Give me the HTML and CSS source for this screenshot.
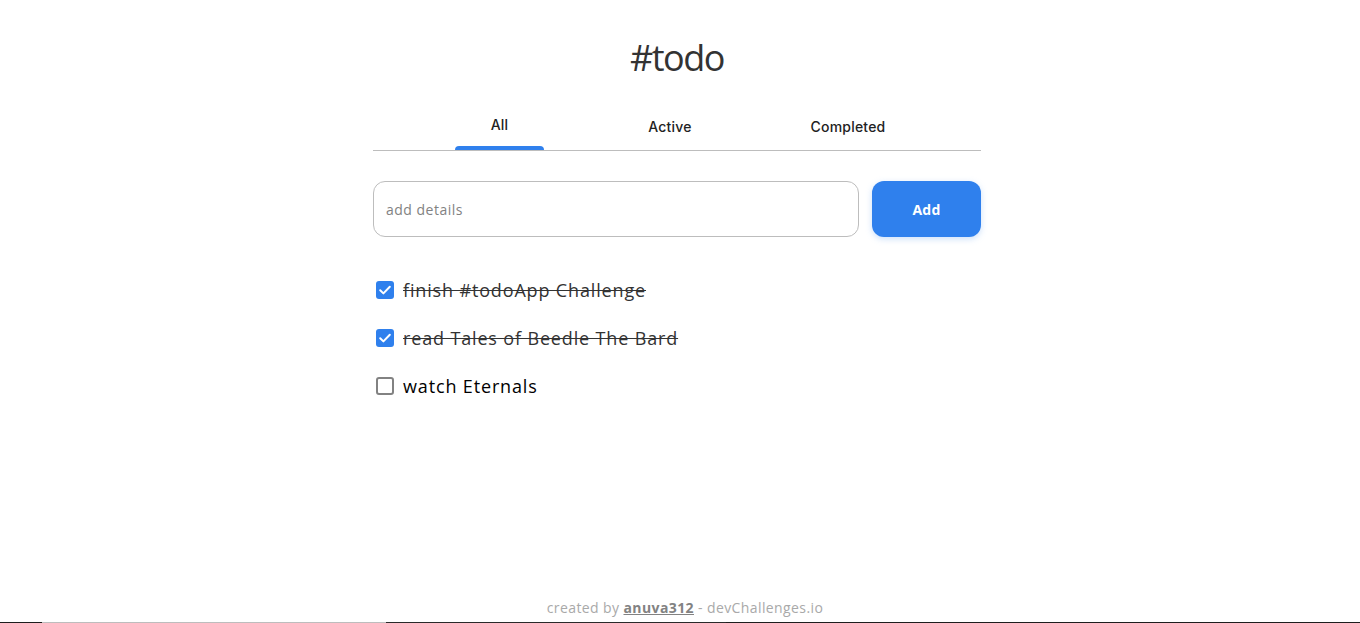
FILE: index.html
```html
<!DOCTYPE html>
<html lang="en">
<head>
<meta charset="utf-8">
<title>#todo</title>
<link rel="stylesheet" href="styles.css">
</head>
<body>
<main class="app">
  <h1 class="title">#todo</h1>
  <nav class="tabs">
    <span class="tab tab-all is-active">All</span>
    <span class="tab tab-active">Active</span>
    <span class="tab tab-completed">Completed</span>
  </nav>
  <form class="add-form">
    <input class="add-input" type="text" placeholder="add details">
    <button class="add-btn" type="button">Add</button>
  </form>
  <ul class="list">
    <li class="item done">
      <span class="box checked"><svg viewBox="0 0 18 18" width="18" height="18"><path d="M4.2 9.3l3.2 3.1 6.4-6.6" fill="none" stroke="#fff" stroke-width="2" stroke-linecap="round" stroke-linejoin="round"/></svg></span>
      <span class="label">finish #todoApp Challenge</span>
    </li>
    <li class="item done">
      <span class="box checked"><svg viewBox="0 0 18 18" width="18" height="18"><path d="M4.2 9.3l3.2 3.1 6.4-6.6" fill="none" stroke="#fff" stroke-width="2" stroke-linecap="round" stroke-linejoin="round"/></svg></span>
      <span class="label">read Tales of Beedle The Bard</span>
    </li>
    <li class="item">
      <span class="box"></span>
      <span class="label">watch Eternals</span>
    </li>
  </ul>
</main>
<footer class="footer">created by <a class="author" href="#">anuva312</a> - devChallenges.io</footer>
<div class="strip">
  <span class="seg seg-dark" style="width:42px"></span>
  <span class="seg seg-gray" style="width:344px"></span>
  <span class="seg seg-dark2" style="width:340px"></span>
  <span class="seg seg-dark" style="flex:1"></span>
</div>
</body>
</html>
```
FILE: styles.css
```css
* { box-sizing: border-box; }
html, body { height: 100%; }
body {
  margin: 0;
  padding-right: 6px;
  background: #fff;
  font-family: "Open Sans", "Liberation Sans", sans-serif;
  color: #333;
  display: flex;
  flex-direction: column;
  min-height: 100vh;
}
.app {
  width: 608px;
  margin: 0 auto;
  flex: 1;
  display: flex;
  flex-direction: column;
}
.title {
  margin: 36px 0 0;
  text-align: center;
  font-family: "Open Sans", sans-serif;
  font-weight: 400;
  font-size: 36px;
  line-height: 44px;
  letter-spacing: -1.5px;
  color: #333;
}
.tabs {
  margin-top: 28px;
  display: flex;
  padding-left: 82px;
  border-bottom: 1px solid #bdbdbd;
  height: 43px;
}
.tab {
  position: relative;
  text-align: center;
  font-family: Inter, "Open Sans", sans-serif;
  font-size: 14px;
  font-weight: 500;
  letter-spacing: 0.2px;
  color: #222;
  line-height: 17px;
  padding-top: 10px;
}
.tab-all { width: 89px; padding-top: 8px; }
.tab-active { width: 252px; }
.tab-completed { width: 104px; }
.tab.is-active::after {
  content: "";
  position: absolute;
  left: 0;
  right: 0;
  bottom: 0;
  height: 4px;
  background: #2f80ed;
  border-radius: 4px 4px 0 0;
}
.add-form {
  margin-top: 30px;
  display: flex;
  gap: 13px;
}
.add-input {
  flex: 1;
  height: 56px;
  border: 1px solid #bdbdbd;
  border-radius: 12px;
  padding: 0 12px;
  font-family: "Open Sans", sans-serif;
  font-size: 14px;
  letter-spacing: 0.5px;
  color: #333;
  outline: none;
}
.add-input::placeholder { color: #828282; }
.add-btn {
  width: 109px;
  height: 56px;
  border: none;
  border-radius: 12px;
  background: #2f80ed;
  color: #fff;
  font-family: "Open Sans", sans-serif;
  font-weight: 700;
  font-size: 14px;
  letter-spacing: 0.2px;
  box-shadow: 0 2px 6px rgba(127, 177, 243, 0.4);
}
.list {
  list-style: none;
  margin: 42px 0 0;
  padding: 0;
  display: flex;
  flex-direction: column;
  gap: 26px;
}
.item {
  display: flex;
  align-items: center;
  gap: 9px;
  padding-left: 3px;
  height: 22px;
}
.box {
  width: 18px;
  height: 18px;
  border: 2px solid #828282;
  border-radius: 3px;
  display: flex;
  flex: none;
}
.box.checked {
  border: none;
  background: #2f80ed;
}
.label {
  font-size: 18px;
  font-weight: 500;
  letter-spacing: 0.85px;
  line-height: 22px;
  color: #000;
}
.done .label {
  color: #333;
  text-decoration: line-through;
}
.footer {
  text-align: center;
  font-size: 14px;
  line-height: 17px;
  letter-spacing: 0.4px;
  color: #a9a9a9;
  padding-bottom: 6px;
  padding-left: 16px;
}
.author {
  color: #828282;
  font-weight: 700;
}
.strip {
  display: flex;
  height: 1px;
  margin-right: -6px;
}
.seg-dark { background: #1e1e1e; }
.seg-dark2 { background: #2a2a2a; }
.seg-gray { background: #bdbdbd; }
```
